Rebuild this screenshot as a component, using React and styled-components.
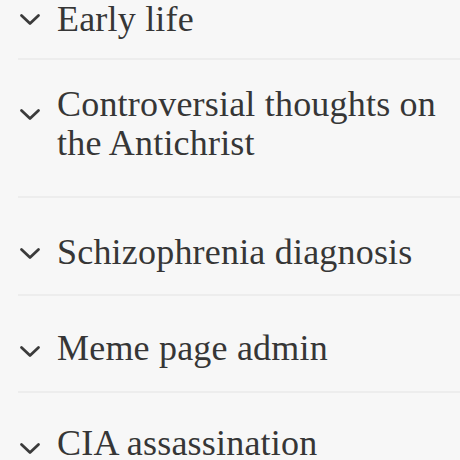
import styled, { createGlobalStyle } from "styled-components";

const GlobalStyle = createGlobalStyle`
  html, body {
    margin: 0;
    padding: 0;
    background: #f7f7f7;
  }
  body {
    width: 460px;
    height: 460px;
    overflow: hidden;
  }
`;

// spacing taken from the screenshot, rows aren't perfectly even
const sections = [
  { title: "Early life", pt: 0, pb: 19, icon: 13 },
  { title: "Controversial thoughts on the Antichrist", pt: 25, pb: 33, icon: 23 },
  { title: "Schizophrenia diagnosis", pt: 35, pb: 22, icon: 14 },
  { title: "Meme page admin", pt: 33, pb: 23, icon: 16 },
  { title: "CIA assassination", pt: 31, pb: 20, icon: 18, last: true },
];

const Chevron = () => (
  <svg width="22" height="13" viewBox="0 0 22 13" fill="none">
    <path
      d="M2.5 2.5 L11 10.5 L19.5 2.5"
      stroke="#3b3b3b"
      strokeWidth="2.8"
      strokeLinecap="round"
      strokeLinejoin="round"
    />
  </svg>
);

const App = () => {
  return (
    <Page>
      <GlobalStyle />
      <SectionList>
        {sections.map((s) => (
          <Section key={s.title} $pt={s.pt} $pb={s.pb} $last={s.last}>
            <IconBox $offset={s.icon}>
              <Chevron />
            </IconBox>
            <Heading>{s.title}</Heading>
          </Section>
        ))}
      </SectionList>
    </Page>
  );
};

const Page = styled.div`
  width: 460px;
  height: 460px;
  overflow: hidden;
  background: #f7f7f7;
`;

const SectionList = styled.div`
  display: flex;
  flex-direction: column;
`;

const Section = styled.div`
  display: flex;
  align-items: flex-start;
  margin-left: 18px;
  padding: ${(p) => p.$pt}px 0 ${(p) => p.$pb}px;
  border-bottom: ${(p) => (p.$last ? "none" : "2px solid #ededed")};
`;

const IconBox = styled.div`
  flex: 0 0 auto;
  width: 39px;
  padding-top: ${(p) => p.$offset}px;
  padding-left: 1px;
  box-sizing: border-box;
  svg {
    display: block;
  }
`;

const Heading = styled.h2`
  margin: 0;
  font-family: "Liberation Serif", "Times New Roman", serif;
  font-weight: normal;
  font-size: 36px;
  line-height: 39px;
  letter-spacing: 0.2px;
  color: #363636;
  padding-right: 8px;
`;

export default App;
